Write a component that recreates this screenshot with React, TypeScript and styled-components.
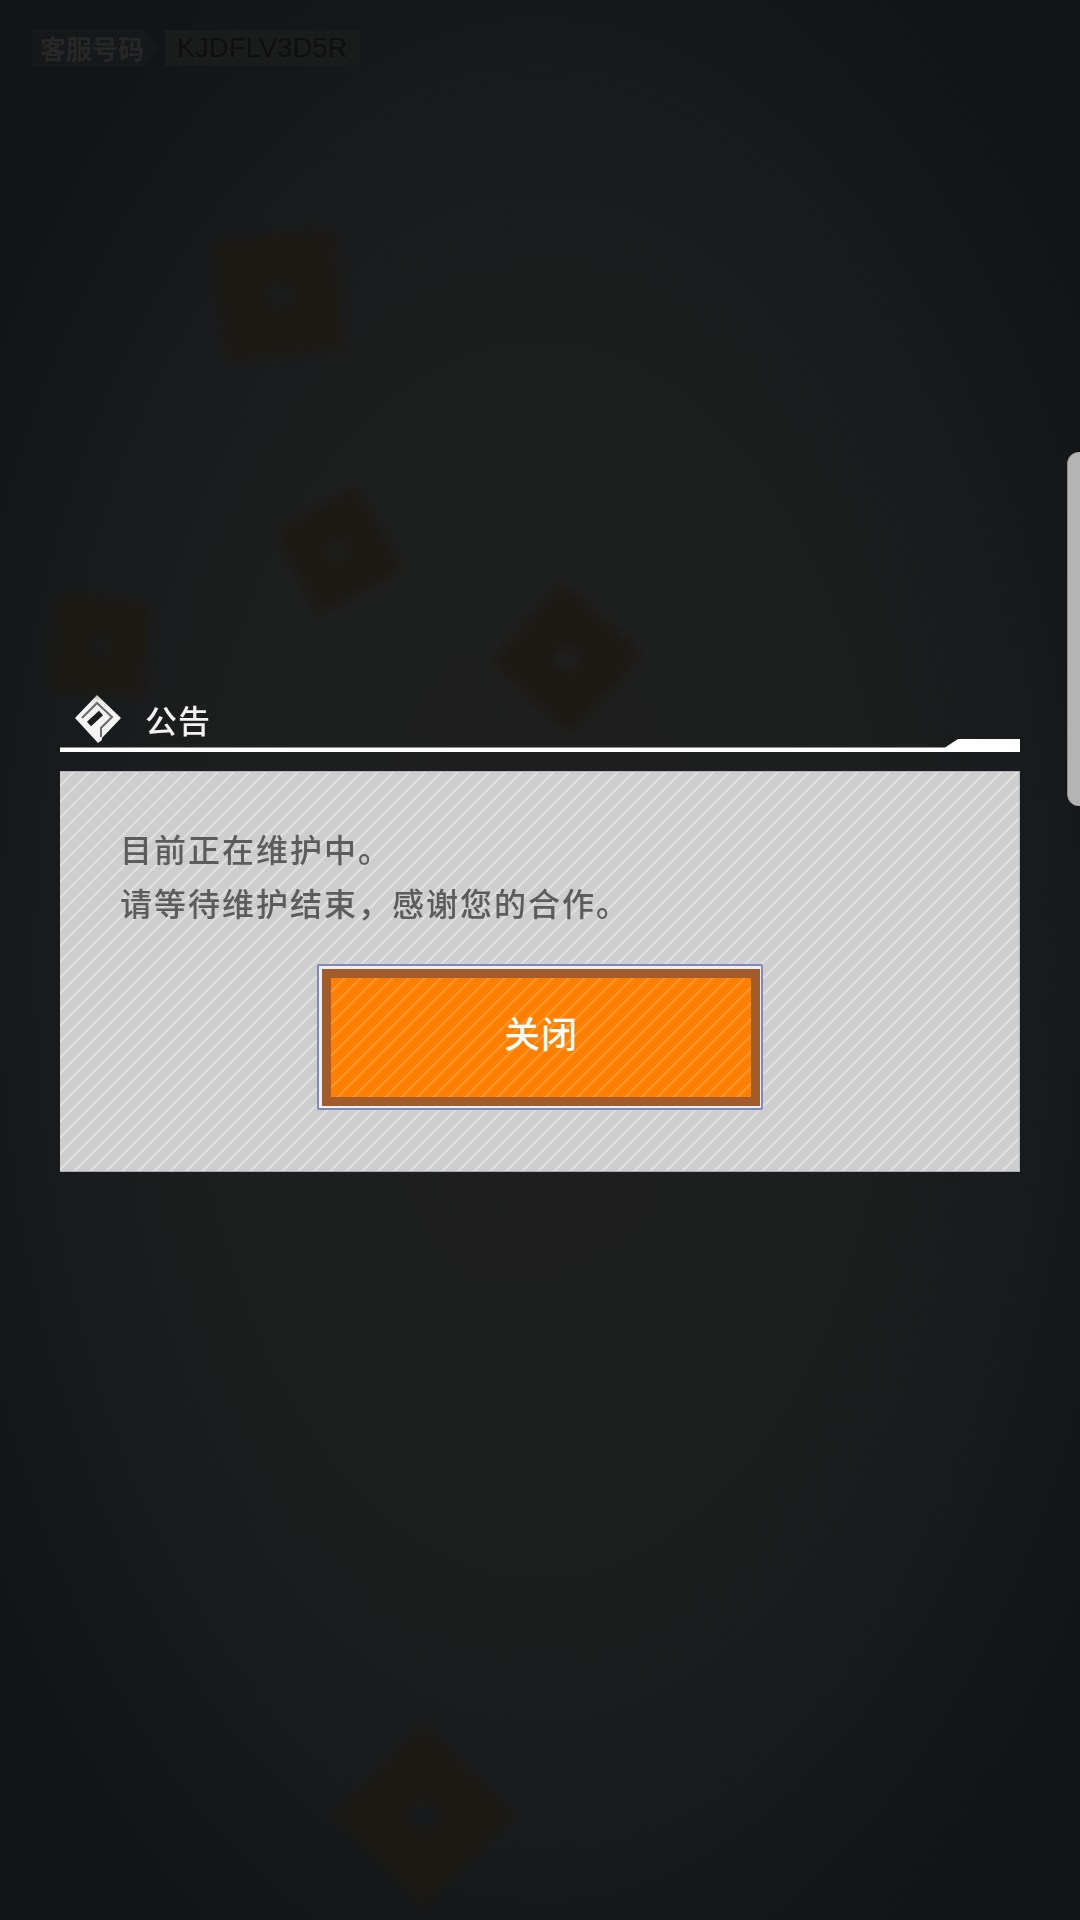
import React from "react";
import styled, { createGlobalStyle } from "styled-components";

const Global = createGlobalStyle`
  html, body { margin: 0; padding: 0; background: #151617; }
`;

const CJK = `"Noto Sans CJK SC", "Noto Sans", sans-serif`;

const Page = styled.div`
  position: relative;
  width: 1080px;
  height: 1920px;
  overflow: hidden;
  display: flex;
  flex-direction: column;
  background: radial-gradient(ellipse 660px 1150px at 50% 50%, #1f1f1f 0%, #1d1e1e 50%, #191a1b 75%, #131415 100%);
  font-family: ${CJK};
`;

const Header = styled.div`
  display: flex;
  align-items: center;
  height: 36px;
  margin: 30px 0 0 32px;
`;

const CodeLabel = styled.span`
  padding-left: 8px;
  background: #17181a;
  font-size: 26px;
  line-height: 36px;
  font-weight: 700;
  color: #272727;
  filter: blur(0.7px);
`;

const Chevron = styled.span`
  width: 0;
  height: 0;
  border-left: 15px solid #17181a;
  border-top: 18px solid transparent;
  border-bottom: 18px solid transparent;
`;

const CodeValue = styled.span`
  margin-left: 6px;
  padding: 0 12px;
  background: #1a1b1b;
  font-family: "Liberation Sans", sans-serif;
  font-size: 27px;
  line-height: 36px;
  color: #0f0f0f;
  letter-spacing: 0.3px;
  filter: blur(0.7px);
`;

const Mark = styled.div<{ $size: number; $x: number; $y: number; $tilt: number }>`
  position: absolute;
  left: ${(p) => p.$x - p.$size / 2}px;
  top: ${(p) => p.$y - p.$size / 2}px;
  width: ${(p) => p.$size}px;
  height: ${(p) => p.$size}px;
  box-sizing: border-box;
  border: ${(p) => Math.round(p.$size * 0.39)}px solid #1b1913;
  transform: rotate(${(p) => p.$tilt}deg);
  filter: blur(6px);
`;

const SideTab = styled.div`
  position: absolute;
  right: 0;
  top: 452px;
  width: 13px;
  height: 354px;
  background: #b4b4b4;
  border-radius: 12px 0 0 12px;
  border-left: 1px solid #8a8a8a;
  box-sizing: border-box;
`;

const Dialog = styled.section`
  display: flex;
  flex-direction: column;
  margin: 628px 60px 0;
`;

const TitleRow = styled.div`
  display: flex;
  align-items: center;
  height: 50px;
  padding-left: 14px;
  gap: 23px;
`;

const TitleText = styled.h2`
  margin: 0;
  font-size: 32px;
  line-height: 50px;
  font-weight: 500;
  letter-spacing: 1px;
  color: #f2f2f2;
  filter: blur(0.5px);
`;

const Rule = styled.svg`
  display: block;
  width: 960px;
  height: 13px;
  margin-top: -5px;
`;

const Panel = styled.div`
  margin-top: 19px;
  height: 401px;
  box-sizing: border-box;
  border-top: 1px solid #b4b5c0;
  border-right: 1px solid #b4b5c0;
  border-bottom: 1px solid #a9aab4;
  padding: 49px 59px 0 60px;
  display: flex;
  flex-direction: column;
  background-color: #cecece;
  background-image: repeating-linear-gradient(
    135deg,
    #cecece 0,
    #cecece 8.3px,
    #e0e0e0 9.3px,
    #e0e0e0 10.2px,
    #cecece 11.31px
  );
`;

const Message = styled.p`
  margin: 0;
  font-size: 32px;
  line-height: 54px;
  font-weight: 500;
  letter-spacing: 2px;
  color: #5c5c5c;
  filter: blur(0.6px);
`;

const CloseFrame = styled.div`
  align-self: center;
  margin-top: 35px;
  box-sizing: border-box;
  width: 446px;
  height: 146px;
  border: 2px solid #8288bb;
  border-radius: 2px;
  padding: 3px 1px 2px 3px;
  background: #f0f0f4;
`;

const CloseButton = styled.button`
  display: flex;
  align-items: center;
  justify-content: center;
  width: 100%;
  height: 100%;
  box-sizing: border-box;
  padding: 0 0 12px;
  border: 9px solid #a25c2c;
  background-color: #ff8000;
  background-image: repeating-linear-gradient(
    135deg,
    #ff8000 0,
    #ff8000 8.3px,
    #ff9a33 9.3px,
    #ff9a33 10.2px,
    #ff8000 11.31px
  );
  font-family: ${CJK};
  font-size: 36px;
  font-weight: 500;
  letter-spacing: 1px;
  color: #ffffff;
`;

const CloseLabel = styled.span`
  filter: blur(0.4px);
`;

const Emblem = () => (
  <svg width="48" height="50" viewBox="0 0 48 50" style={{ flex: "none" }}>
    <path d="M23 1 L47 24 L28 44 L28 46 L24 49 L1 24 Z" fill="#f4f4f4" />
    <g fill="none" stroke="#1c1c1c">
      <path d="M8 24 L23 9 L38 23 L27 34 L27 43" strokeWidth="2" stroke="#6a6a6a" />
      <path d="M15 30 L27 19" strokeWidth="6" />
    </g>
  </svg>
);

const marks = [
  { x: 280, y: 295, size: 118, tilt: -6 },
  { x: 338, y: 550, size: 92, tilt: -28 },
  { x: 566, y: 658, size: 105, tilt: 42 },
  { x: 100, y: 646, size: 92, tilt: 4 },
  { x: 424, y: 1816, size: 126, tilt: 45 },
];

export default function App() {
  return (
    <Page>
      <Global />
      {marks.map((m, i) => (
        <Mark key={i} $x={m.x} $y={m.y} $size={m.size} $tilt={m.tilt} />
      ))}
      <SideTab />
      <Header>
        <CodeLabel>客服号码</CodeLabel>
        <Chevron />
        <CodeValue>KJDFLV3D5R</CodeValue>
      </Header>
      <Dialog>
        <TitleRow>
          <Emblem />
          <TitleText>公告</TitleText>
        </TitleRow>
        <Rule viewBox="0 0 960 13">
          <path d="M0 8.5 H885 L898 0 H960 V13 H0 Z" fill="#fff" />
        </Rule>
        <Panel>
          <Message>
            目前正在维护中。
            <br />
            请等待维护结束，感谢您的合作。
          </Message>
          <CloseFrame>
            <CloseButton>
              <CloseLabel>关闭</CloseLabel>
            </CloseButton>
          </CloseFrame>
        </Panel>
      </Dialog>
    </Page>
  );
}
